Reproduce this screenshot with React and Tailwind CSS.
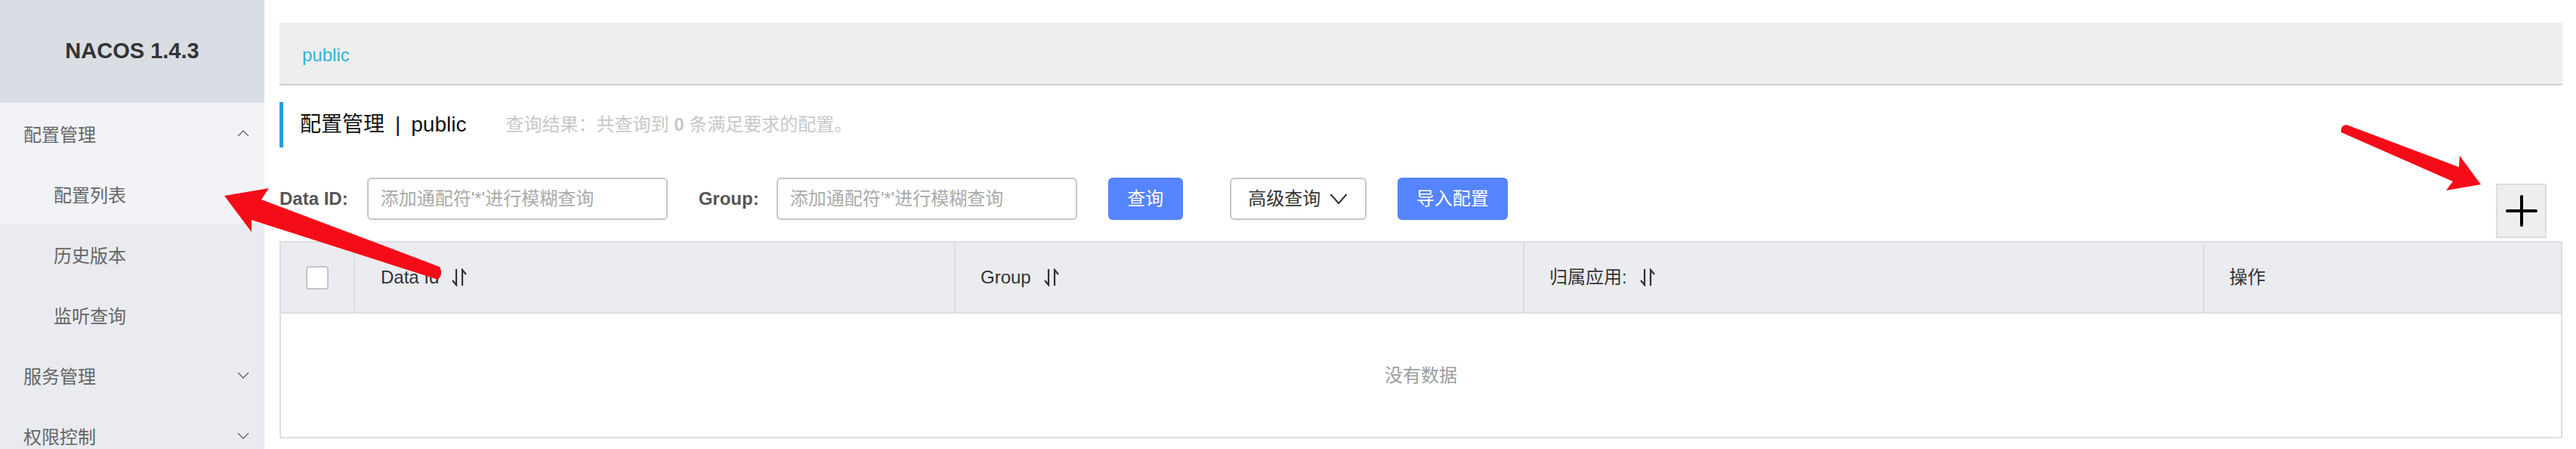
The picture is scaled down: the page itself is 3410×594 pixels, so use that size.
import React from "react";

const FONT = "font-['Liberation_Sans','Noto_Sans_CJK_SC',sans-serif]";

function Chevron({ up }) {
  return (
    <svg width="16" height="9" viewBox="0 0 16 9" className="shrink-0">
      <polyline
        points={up ? "1,8 8,1 15,8" : "1,1 8,8 15,1"}
        fill="none"
        stroke="#666"
        strokeWidth="1.4"
      />
    </svg>
  );
}

function SortIcon() {
  return (
    <svg width="22" height="24" viewBox="0 0 22 24" className="shrink-0">
      <path d="M7 1 V22 L2 16" fill="none" stroke="#333" strokeWidth="2.2" strokeLinejoin="miter" />
      <path d="M15 23 V2 L20 8" fill="none" stroke="#333" strokeWidth="2.2" strokeLinejoin="miter" />
    </svg>
  );
}

function MenuRow({ label, level, chevron, light }) {
  return (
    <div
      className={`h-[80px] shrink-0 flex items-center justify-between pr-[20px] ${
        level === 1 ? "pl-[31px]" : "pl-[71px]"
      } ${light ? "bg-[#f2f3f7]" : ""}`}
    >
      <span className="text-[24px] text-[#666] leading-none pt-[6px]">{label}</span>
      {chevron && <Chevron up={chevron === "up"} />}
    </div>
  );
}

function Input() {
  return (
    <div className="w-[398px] h-[56px] border-2 border-[#c4c6cf] rounded-[6px] flex items-center pl-[16px] bg-white">
      <span className="text-[24px] text-[#aaaaaa] leading-none">添加通配符'*'进行模糊查询</span>
    </div>
  );
}

export default function App() {
  return (
    <div className={`relative w-[3410px] h-[594px] overflow-hidden bg-white flex ${FONT}`}>
      {/* Sidebar */}
      <aside className="w-[350px] shrink-0 flex flex-col bg-[#e9ebf0] overflow-hidden">
        <div className="h-[136px] shrink-0 bg-[#d9dde4] flex items-center justify-center">
          <span className="text-[29px] font-bold text-[#333]">NACOS 1.4.3</span>
        </div>
        <MenuRow label="配置管理" level={1} chevron="up" light />
        <MenuRow label="配置列表" level={2} light />
        <MenuRow label="历史版本" level={2} />
        <MenuRow label="监听查询" level={2} />
        <MenuRow label="服务管理" level={1} chevron="down" />
        <MenuRow label="权限控制" level={1} chevron="down" />
      </aside>

      {/* Main */}
      <main className="flex-1 pl-[20px] pr-[18px] pt-[30px] flex flex-col">
        <div className="h-[83px] shrink-0 bg-[#eeeeee] border-b-2 border-[#cfcfcf] flex items-center pl-[30px] pt-[4px]">
          <span className="text-[24px] text-[#33b3d8]">public</span>
        </div>

        <div className="mt-[22px] h-[60px] shrink-0 border-l-[5px] border-[#2b9bd6] flex items-center pl-[22px]">
          <span className="text-[28px] text-[#111]">配置管理</span>
          <span className="text-[28px] text-[#111] mx-[14px]">|</span>
          <span className="text-[28px] text-[#111]">public</span>
          <span className="text-[24px] text-[#c8c8c8] ml-[52px]">
            查询结果：共查询到 <b className="font-bold">0</b> 条满足要求的配置。
          </span>
        </div>

        <div className="mt-[40px] flex items-start shrink-0">
          <div className="h-[56px] flex items-center">
            <span className="text-[24px] font-bold text-[#555] mr-[25px]">Data ID:</span>
            <Input />
            <span className="text-[24px] font-bold text-[#555] ml-[41px] mr-[23px]">Group:</span>
            <Input />
            <div className="ml-[41px] w-[99px] h-[56px] rounded-[6px] bg-[#5584ff] flex items-center justify-center text-white text-[24px]">
              查询
            </div>
            <div className="ml-[62px] w-[181px] h-[56px] rounded-[6px] border-2 border-[#c4c6cf] bg-white flex items-center justify-center gap-[12px] text-[#333] text-[24px]">
              <span>高级查询</span>
              <svg width="24" height="14" viewBox="0 0 24 14">
                <polyline points="1.5,1 12,13 22.5,1" fill="none" stroke="#333" strokeWidth="2" />
              </svg>
            </div>
            <div className="ml-[41px] w-[146px] h-[56px] rounded-[6px] bg-[#5584ff] flex items-center justify-center text-white text-[24px]">
              导入配置
            </div>
          </div>
          <div className="ml-auto mr-[21px] mt-[8px] w-[67px] h-[72px] bg-[#eeeeee] border-2 border-[#dddddd] flex items-center justify-center">
            <svg width="42" height="42" viewBox="0 0 42 42">
              <path d="M21 2 V40 M2 21 H40" stroke="#000" strokeWidth="4" strokeLinecap="round" />
            </svg>
          </div>
        </div>

        <div className="mt-[4px] border-2 border-[#dcdee3] shrink-0">
          <div className="h-[94px] bg-[#ebecf0] border-b-2 border-[#dcdee3] grid grid-cols-[98px_795px_753px_900px_1fr] text-[24px] text-[#333]">
            <div className="flex items-center justify-center border-r-2 border-[#dcdee3]">
              <div className="w-[30px] h-[31px] bg-white border-2 border-[#c4c6cf] rounded-[4px]" />
            </div>
            <div className="flex items-center gap-[16px] pl-[34px] border-r-2 border-[#dcdee3]">
              <span>Data Id</span>
              <SortIcon />
            </div>
            <div className="flex items-center gap-[16px] pl-[33px] border-r-2 border-[#dcdee3]">
              <span>Group</span>
              <SortIcon />
            </div>
            <div className="flex items-center gap-[16px] pl-[33px] border-r-2 border-[#dcdee3]">
              <span>归属应用:</span>
              <SortIcon />
            </div>
            <div className="flex items-center pl-[33px]">
              <span>操作</span>
            </div>
          </div>
          <div className="h-[163px] bg-white flex items-center justify-center">
            <span className="text-[24px] text-[#9a9ca3]">没有数据</span>
          </div>
        </div>
      </main>

      {/* Red annotation arrows */}
      <svg
        className="absolute left-0 top-0 pointer-events-none"
        width="3410"
        height="594"
        viewBox="0 0 3410 594"
      >
        <path
          d="M297 259 L356 249 L346 264 L582 353 Q587 362 580 370 L333 291 L333 307 Z"
          fill="#f50c19"
        />
        <path
          d="M3284 244 L3256 206 L3255 221 L3106 165 Q3098 166 3099 175 L3247 240 L3238 252 Z"
          fill="#f50c19"
        />
      </svg>
    </div>
  );
}
